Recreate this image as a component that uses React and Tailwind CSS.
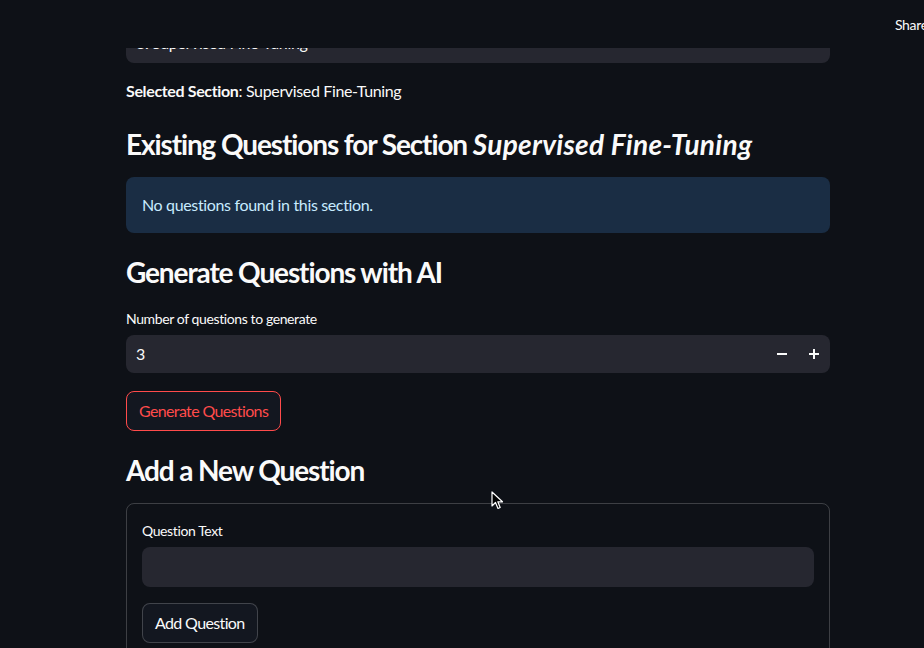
import React from "react";

const font = { fontFamily: '"Lato", "Noto Sans", sans-serif' };

function Cursor() {
  return (
    <svg className="absolute left-[491px] top-[491px] z-20" width="13" height="19" viewBox="0 0 13 19">
      <path d="M1 1 L1 15 L4.5 11.5 L7 17.5 L9.2 16.5 L6.8 10.8 L11.5 10.8 Z" fill="#000" stroke="#fff" strokeWidth="1.2" strokeLinejoin="round" />
    </svg>
  );
}

export default function App() {
  return (
    <div className="relative w-[924px] h-[648px] overflow-hidden bg-[#0e1117] text-[#fafafa] tracking-[-0.022em]" style={font}>
      <div className="absolute left-0 top-0 z-10 h-[48px] w-full bg-[#0e1117] flex items-center pl-[895px]">
        <span className="text-[14px] whitespace-nowrap text-[#fafafa]">Share</span>
      </div>
      <Cursor />
      <div className="ml-[126px] w-[704px] pt-[23px] flex flex-col">
        <div className="h-[40px] rounded-lg bg-[#262730] flex items-center px-[10px] text-[16px]">
          3. Supervised Fine-Tuning
        </div>
        <p className="mt-[16px] text-[16px] leading-[24px]">
          <span className="font-bold">Selected Section</span>: Supervised Fine-Tuning
        </p>
        <h3 className="mt-[23px] text-[28px] leading-[36px] font-bold tracking-[-0.04em]">
          Existing Questions for Section <em className="italic tracking-[0.3px]">Supervised Fine-Tuning</em>
        </h3>
        <div className="mt-[15px] h-[56px] rounded-lg bg-[#1a2d44] flex items-center px-4 text-[16px] text-[#c7ebff]">
          No questions found in this section.
        </div>
        <h3 className="mt-[21px] text-[28px] leading-[36px] font-bold tracking-[-0.04em]">Generate Questions with AI</h3>
        <label className="mt-[19px] text-[14px] leading-[20px] tracking-[-0.028em]">Number of questions to generate</label>
        <div className="mt-[6px] h-[38px] rounded-lg bg-[#262730] flex items-center pl-[10px] text-[16px]">
          <span className="flex-1">3</span>
          <div className="flex items-center h-full">
            <span className="w-[32px] h-full flex items-center justify-center">
              <svg width="10" height="10" viewBox="0 0 10 10"><rect x="0" y="4" width="10" height="2" fill="#fafafa" /></svg>
            </span>
            <span className="w-[32px] h-full flex items-center justify-center">
              <svg width="10" height="10" viewBox="0 0 10 10"><rect x="0" y="4" width="10" height="2" fill="#fafafa" /><rect x="4" y="0" width="2" height="10" fill="#fafafa" /></svg>
            </span>
          </div>
        </div>
        <div className="mt-[18px]">
          <button className="h-[40px] px-[12px] rounded-lg border border-[#ff4b4b] bg-[#131720] text-[#ff4b4b] text-[16px] tracking-[-0.04em]">
            Generate Questions
          </button>
        </div>
        <h3 className="mt-[21px] text-[28px] leading-[36px] font-bold tracking-[-0.04em]">Add a New Question</h3>
        <div className="mt-[15px] rounded-lg border border-[#fafafa33] px-[15px] pt-[17px] pb-[16px] flex flex-col">
          <label className="text-[14px] leading-[20px] tracking-[-0.028em]">Question Text</label>
          <div className="mt-[6px] h-[40px] rounded-lg bg-[#262730]" />
          <div className="mt-[16px]">
            <button className="h-[40px] px-[12px] rounded-lg border border-[#fafafa33] bg-[#131720] text-[#fafafa] text-[16px] tracking-[-0.04em]">
              Add Question
            </button>
          </div>
        </div>
      </div>
    </div>
  );
}
